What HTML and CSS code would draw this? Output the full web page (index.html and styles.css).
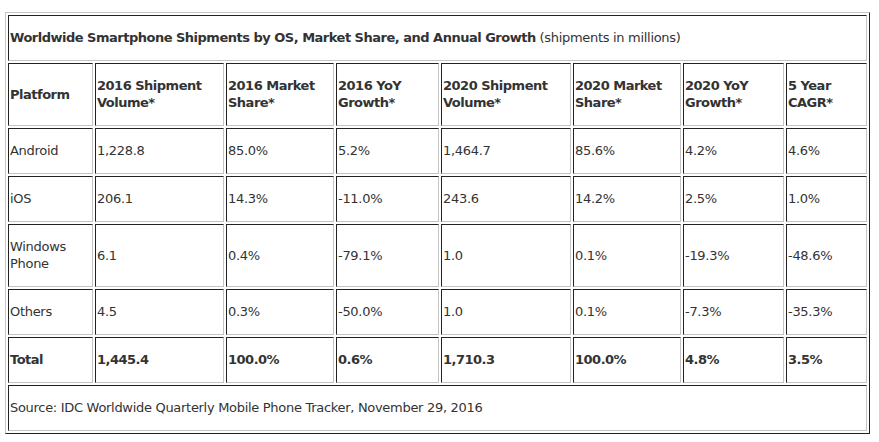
FILE: index.html
```html
<!DOCTYPE html>
<html>
<head>
<meta charset="utf-8">
<link rel="stylesheet" href="styles.css">
</head>
<body>
<table class="idc">
  <colgroup>
    <col class="c1"><col class="c2"><col class="c3"><col class="c4"><col class="c5"><col class="c6"><col class="c7"><col class="c8">
  </colgroup>
  <tr><td colspan="8" class="title"><b>Worldwide Smartphone Shipments by OS, Market Share, and Annual Growth</b> (shipments in millions)</td></tr>
  <tr class="head">
    <th>Platform</th>
    <th>2016 Shipment Volume*</th>
    <th>2016 Market Share*</th>
    <th>2016 YoY Growth*</th>
    <th>2020 Shipment Volume*</th>
    <th>2020 Market Share*</th>
    <th>2020 YoY Growth*</th>
    <th>5 Year CAGR*</th>
  </tr>
  <tr><td>Android</td><td>1,228.8</td><td>85.0%</td><td>5.2%</td><td>1,464.7</td><td>85.6%</td><td>4.2%</td><td>4.6%</td></tr>
  <tr><td>iOS</td><td>206.1</td><td>14.3%</td><td>-11.0%</td><td>243.6</td><td>14.2%</td><td>2.5%</td><td>1.0%</td></tr>
  <tr><td>Windows Phone</td><td>6.1</td><td>0.4%</td><td>-79.1%</td><td>1.0</td><td>0.1%</td><td>-19.3%</td><td>-48.6%</td></tr>
  <tr><td>Others</td><td>4.5</td><td>0.3%</td><td>-50.0%</td><td>1.0</td><td>0.1%</td><td>-7.3%</td><td>-35.3%</td></tr>
  <tr class="total"><td>Total</td><td>1,445.4</td><td>100.0%</td><td>0.6%</td><td>1,710.3</td><td>100.0%</td><td>4.8%</td><td>3.5%</td></tr>
  <tr><td colspan="8">Source: IDC Worldwide Quarterly Mobile Phone Tracker, November 29, 2016</td></tr>
</table>
</body>
</html>
```

FILE: styles.css
```css
html, body {
  background: #ffffff;
}
body {
  margin: 12px 5px;
  font-family: "DejaVu Sans", Verdana, sans-serif;
  font-size: 13px;
  line-height: 17px;
  color: #333333;
}
.idc {
  width: 865px;
  table-layout: fixed;
  border-collapse: separate;
  border-spacing: 2px;
  border-style: solid;
  border-width: 1px;
  border-color: #c4c4c4 #222222 #222222 #c4c4c4;
}
.c1 { width: 85px; }
.c2 { width: 129px; }
.c3 { width: 108px; }
.c4 { width: 103px; }
.c5 { width: 130px; }
.c6 { width: 108px; }
.c7 { width: 101px; }
.c8 { width: 81px; }
.idc td, .idc th {
  box-sizing: border-box;
  border-style: solid;
  border-width: 1px;
  border-color: #222222 #c4c4c4 #c4c4c4 #222222;
  padding: 13px 1px 14px 1px;
  text-align: left;
  vertical-align: middle;
  font-weight: normal;
  letter-spacing: -0.3px;
  overflow: hidden;
}
.idc .head th {
  font-weight: bold;
  letter-spacing: -0.5px;
}
.idc .total td {
  font-weight: bold;
  letter-spacing: -0.5px;
}
.title b {
  font-weight: bold;
  letter-spacing: -0.5px;
}
```
